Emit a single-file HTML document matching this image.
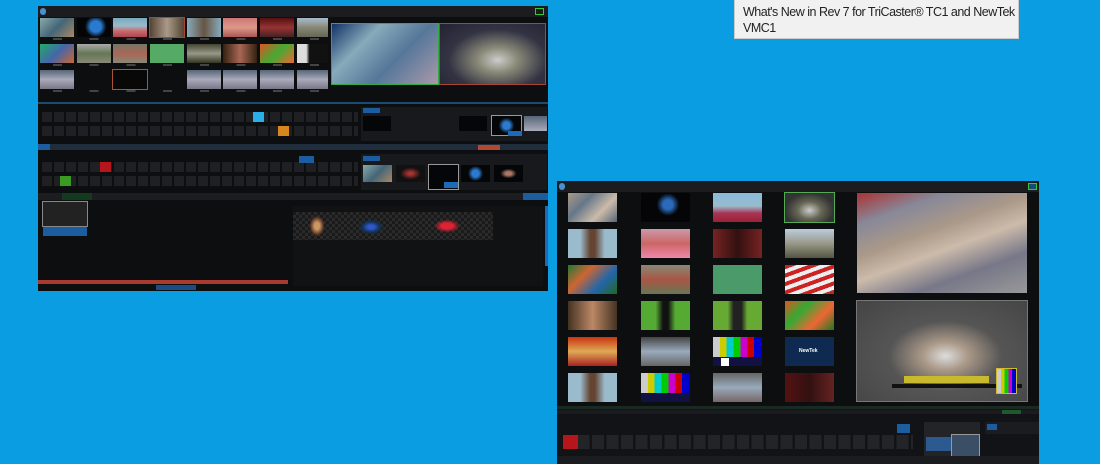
<!DOCTYPE html>
<html><head><meta charset="utf-8"><style>
body{margin:0;width:1100px;height:464px;background:#0b9de2;position:relative;overflow:hidden;font-family:"Liberation Sans",sans-serif}
.a{position:absolute}
.tip{left:734px;top:-1px;width:285px;height:40px;background:#f1f1f1;border:1px solid #ccc;font-size:12.5px;letter-spacing:-0.5px;color:#222;line-height:16px;padding:4px 0 0 8px;box-sizing:border-box;white-space:nowrap;overflow:hidden}
.scr{background:#0d0e10}
.bar{background:#1a1c20}
</style></head><body>
<div class="a tip">What's New in Rev 7 for TriCaster® TC1 and NewTek<br>VMC1</div>

<!-- LEFT SCREENSHOT -->
<div class="a scr" style="left:38px;top:6px;width:510px;height:285px">
 <div class="a bar" style="left:0;top:0;width:510px;height:11px"></div>
 <div class="a" style="left:2px;top:2px;width:6px;height:7px;background:#4a8fd0;border-radius:3px"></div>
 <div class="a" style="left:497px;top:2px;width:9px;height:7px;border:1px solid #3c3;box-sizing:border-box"></div>
 <div class="a" style="left:2px;top:12px;width:34px;height:19px;background:linear-gradient(135deg,#8aa,#467,#a86)"></div>
 <div class="a" style="left:39px;top:12px;width:34px;height:19px;background:radial-gradient(circle at 55% 45%,#2a7bd0 25%,#050508 50%)"></div>
 <div class="a" style="left:75px;top:12px;width:34px;height:19px;background:linear-gradient(#7ab 0,#9bc 40%,#c66 70%,#a45)"></div>
 <div class="a" style="left:112px;top:12px;width:34px;height:19px;background:linear-gradient(90deg,#543,#a98,#543);outline:1px solid #a43"></div>
 <div class="a" style="left:149px;top:12px;width:34px;height:19px;background:linear-gradient(90deg,#8ab,#654,#8ab)"></div>
 <div class="a" style="left:185px;top:12px;width:34px;height:19px;background:linear-gradient(#c77,#d98,#a55)"></div>
 <div class="a" style="left:222px;top:12px;width:34px;height:19px;background:linear-gradient(#511,#933,#422)"></div>
 <div class="a" style="left:259px;top:12px;width:31px;height:19px;background:linear-gradient(#abc,#887,#665)"></div>
 <div class="a" style="left:2px;top:38px;width:34px;height:19px;background:linear-gradient(135deg,#2a6,#46a,#c63)"></div>
 <div class="a" style="left:39px;top:38px;width:34px;height:19px;background:linear-gradient(#aaa,#675,#887)"></div>
 <div class="a" style="left:75px;top:38px;width:34px;height:19px;background:linear-gradient(#776,#a65,#887)"></div>
 <div class="a" style="left:112px;top:38px;width:34px;height:19px;background:#5a6"></div>
 <div class="a" style="left:149px;top:38px;width:34px;height:19px;background:linear-gradient(#443,#998,#332)"></div>
 <div class="a" style="left:185px;top:38px;width:34px;height:19px;background:linear-gradient(90deg,#321,#a65,#321)"></div>
 <div class="a" style="left:222px;top:38px;width:34px;height:19px;background:linear-gradient(135deg,#d52,#4a3,#e63)"></div>
 <div class="a" style="left:259px;top:38px;width:31px;height:19px;background:linear-gradient(90deg,#ddd 30%,#111 40%)"></div>
 <div class="a" style="left:2px;top:64px;width:34px;height:19px;background:linear-gradient(#567,#aab,#778)"></div>
 <div class="a" style="left:75px;top:64px;width:34px;height:19px;background:#080808;outline:1px solid #a53"></div>
 <div class="a" style="left:149px;top:64px;width:34px;height:19px;background:linear-gradient(#567,#aab,#778)"></div>
 <div class="a" style="left:185px;top:64px;width:34px;height:19px;background:linear-gradient(#567,#aab,#778)"></div>
 <div class="a" style="left:222px;top:64px;width:34px;height:19px;background:linear-gradient(#567,#aab,#778)"></div>
 <div class="a" style="left:259px;top:64px;width:31px;height:19px;background:linear-gradient(#567,#aab,#778)"></div>
 <div class="a" style="left:2px;top:32px;width:288px;height:2px;background:repeating-linear-gradient(90deg,transparent 0 13px,#444 13px 22px,transparent 22px 36.7px)"></div>
 <div class="a" style="left:2px;top:58px;width:288px;height:2px;background:repeating-linear-gradient(90deg,transparent 0 13px,#444 13px 22px,transparent 22px 36.7px)"></div>
 <div class="a" style="left:2px;top:84px;width:288px;height:2px;background:repeating-linear-gradient(90deg,transparent 0 13px,#444 13px 22px,transparent 22px 36.7px)"></div>
 <div class="a" style="left:294px;top:18px;width:106px;height:60px;background:linear-gradient(135deg,#136 0,#8ab 30%,#579 60%,#a9a 100%);outline:1px solid #3a4"></div>
 <div class="a" style="left:402px;top:18px;width:105px;height:60px;background:radial-gradient(ellipse at 55% 60%,#ccc 0,#887 25%,#334 60%,#223 100%);outline:1px solid #a43"></div>
 <div class="a" style="left:0;top:96px;width:510px;height:2px;background:#1d4a70"></div>
 <div class="a" style="left:4px;top:106px;width:316px;height:10px;background:repeating-linear-gradient(90deg,#1e2024 0 10px,#0d0e10 10px 12px)"></div>
 <div class="a" style="left:4px;top:120px;width:316px;height:10px;background:repeating-linear-gradient(90deg,#1e2024 0 10px,#0d0e10 10px 12px)"></div>
 <div class="a" style="left:215px;top:106px;width:11px;height:10px;background:#2ab0e8"></div>
 <div class="a" style="left:240px;top:120px;width:11px;height:10px;background:#d8861e"></div>
 <div class="a" style="left:323px;top:101px;width:186px;height:34px;background:#17191c"></div>
 <div class="a" style="left:325px;top:102px;width:17px;height:5px;background:#1c5da0"></div>
 <div class="a" style="left:325px;top:110px;width:28px;height:15px;background:#050608"></div>
 <div class="a" style="left:421px;top:110px;width:28px;height:15px;background:#050608"></div>
 <div class="a" style="left:454px;top:110px;width:29px;height:19px;background:radial-gradient(circle,#2a7bd0 20%,#050608 45%);outline:1px solid #999"></div>
 <div class="a" style="left:470px;top:125px;width:14px;height:5px;background:#1c6ab8"></div>
 <div class="a" style="left:486px;top:110px;width:23px;height:15px;background:linear-gradient(#567,#aab)"></div>
 <div class="a" style="left:0;top:138px;width:510px;height:6px;background:#1f2d3d"></div>
 <div class="a" style="left:0;top:138px;width:12px;height:6px;background:#1c5da0"></div>
 <div class="a" style="left:440px;top:139px;width:22px;height:5px;background:#b4482e"></div>
 <div class="a" style="left:4px;top:156px;width:316px;height:10px;background:repeating-linear-gradient(90deg,#1e2024 0 10px,#0d0e10 10px 12px)"></div>
 <div class="a" style="left:4px;top:170px;width:316px;height:10px;background:repeating-linear-gradient(90deg,#1e2024 0 10px,#0d0e10 10px 12px)"></div>
 <div class="a" style="left:62px;top:156px;width:11px;height:10px;background:#b5161c"></div>
 <div class="a" style="left:22px;top:170px;width:11px;height:10px;background:#3a9a22"></div>
 <div class="a" style="left:261px;top:150px;width:15px;height:7px;background:#1c5da0"></div>
 <div class="a" style="left:323px;top:148px;width:186px;height:36px;background:#17191c"></div>
 <div class="a" style="left:325px;top:150px;width:17px;height:5px;background:#1c5da0"></div>
 <div class="a" style="left:325px;top:159px;width:29px;height:17px;background:linear-gradient(135deg,#8aa,#467,#a86)"></div>
 <div class="a" style="left:358px;top:159px;width:29px;height:17px;background:radial-gradient(#a33 10%,#111 50%)"></div>
 <div class="a" style="left:391px;top:159px;width:29px;height:24px;outline:1px solid #999;background:#050608"></div>
 <div class="a" style="left:406px;top:176px;width:14px;height:6px;background:#1c6ab8"></div>
 <div class="a" style="left:423px;top:159px;width:29px;height:17px;background:radial-gradient(circle,#2a7bd0 20%,#050608 45%)"></div>
 <div class="a" style="left:456px;top:159px;width:29px;height:17px;background:radial-gradient(#a76 15%,#050608 40%)"></div>
 <div class="a" style="left:0;top:187px;width:510px;height:7px;background:#1b1d21"></div>
 <div class="a" style="left:24px;top:187px;width:30px;height:7px;background:#123a1e"></div>
 <div class="a" style="left:485px;top:187px;width:25px;height:7px;background:#1c5da0"></div>
 <div class="a" style="left:5px;top:196px;width:44px;height:24px;background:#222;outline:1px solid #888"></div>
 <div class="a" style="left:5px;top:221px;width:44px;height:9px;background:#1c5da0"></div>
 <div class="a" style="left:255px;top:200px;width:250px;height:80px;background:#111214"></div>
 <div class="a" style="left:255px;top:206px;width:200px;height:28px;background:repeating-conic-gradient(#2a2a2a 0 25%,#1a1a1a 0 50%) 0 0/6px 6px"></div>
 <div class="a" style="left:270px;top:208px;width:18px;height:24px;background:radial-gradient(#c96 20%,#532 50%,transparent 60%)"></div>
 <div class="a" style="left:318px;top:212px;width:30px;height:18px;background:radial-gradient(#35c 15%,#135 40%,transparent 60%)"></div>
 <div class="a" style="left:395px;top:213px;width:28px;height:14px;background:radial-gradient(#d23 30%,transparent 65%)"></div>
 <div class="a" style="left:507px;top:200px;width:3px;height:60px;background:#1c6ab8"></div>
 <div class="a" style="left:0;top:274px;width:250px;height:4px;background:#a93b2e"></div>
 <div class="a" style="left:118px;top:279px;width:40px;height:5px;background:#1c6ab8;opacity:.7"></div>
</div>

<!-- RIGHT SCREENSHOT -->
<div class="a scr" style="left:557px;top:181px;width:482px;height:283px">
 <div class="a bar" style="left:0;top:0;width:482px;height:11px"></div>
 <div class="a" style="left:2px;top:2px;width:6px;height:7px;background:#4a8fd0;border-radius:3px"></div>
 <div class="a" style="left:471px;top:2px;width:9px;height:7px;border:1px solid #3c3;box-sizing:border-box;background:#1a4a7a"></div>
 <div class="a" style="left:11px;top:12px;width:49px;height:29px;background:linear-gradient(135deg,#a98,#678,#cba,#567)"></div>
 <div class="a" style="left:84px;top:12px;width:49px;height:29px;background:radial-gradient(circle at 55% 40%,#2a6ab8 15%,#050508 35%)"></div>
 <div class="a" style="left:156px;top:12px;width:49px;height:29px;background:linear-gradient(#8bd 0,#9bc 45%,#a35 70%,#923)"></div>
 <div class="a" style="left:228px;top:12px;width:49px;height:29px;background:radial-gradient(ellipse at 50% 60%,#ccc 0,#665 35%,#333 70%);outline:1px solid #5a5"></div>
 <div class="a" style="left:11px;top:48px;width:49px;height:29px;background:linear-gradient(90deg,#9bc 25%,#643 45%,#643 55%,#9bc 75%)"></div>
 <div class="a" style="left:84px;top:48px;width:49px;height:29px;background:linear-gradient(#c9a,#c66,#e8a)"></div>
 <div class="a" style="left:156px;top:48px;width:49px;height:29px;background:linear-gradient(90deg,#722,#311,#722)"></div>
 <div class="a" style="left:228px;top:48px;width:49px;height:29px;background:linear-gradient(#bcd,#998,#554)"></div>
 <div class="a" style="left:11px;top:84px;width:49px;height:29px;background:linear-gradient(135deg,#273,#c63,#26a,#262)"></div>
 <div class="a" style="left:84px;top:84px;width:49px;height:29px;background:linear-gradient(#887,#a54,#675)"></div>
 <div class="a" style="left:156px;top:84px;width:49px;height:29px;background:#4b9a6a"></div>
 <div class="a" style="left:228px;top:84px;width:49px;height:29px;background:repeating-linear-gradient(160deg,#c22 0 4px,#eee 4px 8px)"></div>
 <div class="a" style="left:11px;top:120px;width:49px;height:29px;background:linear-gradient(90deg,#432,#b86,#432)"></div>
 <div class="a" style="left:84px;top:120px;width:49px;height:29px;background:linear-gradient(90deg,#5a3 30%,#111 45%,#111 55%,#5a3 70%)"></div>
 <div class="a" style="left:156px;top:120px;width:49px;height:29px;background:linear-gradient(90deg,#6a3 30%,#222 42%,#222 58%,#6a3 70%)"></div>
 <div class="a" style="left:228px;top:120px;width:49px;height:29px;background:linear-gradient(135deg,#d52,#3a3,#e63,#272)"></div>
 <div class="a" style="left:11px;top:156px;width:49px;height:29px;background:linear-gradient(#c31,#da5,#a22)"></div>
 <div class="a" style="left:84px;top:156px;width:49px;height:29px;background:linear-gradient(#444,#9ab,#666)"></div>
 <div class="a" style="left:156px;top:156px;width:49px;height:29px;background:linear-gradient(90deg,#ccc 0 14%,#cc0 14% 28%,#0cc 28% 42%,#0c0 42% 56%,#c0c 56% 70%,#c00 70% 84%,#00c 84%)"></div>
 <div class="a" style="left:156px;top:176px;width:49px;height:9px;background:#114"></div>
 <div class="a" style="left:164px;top:177px;width:8px;height:8px;background:#fff"></div>
 <div class="a" style="left:228px;top:156px;width:49px;height:29px;background:#0e2a50"></div>
 <div class="a" style="left:242px;top:167px;width:22px;height:6px;color:#fff;font-size:5px;font-weight:bold">NewTek</div>
 <div class="a" style="left:11px;top:192px;width:49px;height:29px;background:linear-gradient(90deg,#9bc 25%,#643 45%,#643 55%,#9bc 75%)"></div>
 <div class="a" style="left:84px;top:192px;width:49px;height:29px;background:linear-gradient(90deg,#ccc 0 14%,#cc0 14% 28%,#0cc 28% 42%,#0c0 42% 56%,#c0c 56% 70%,#c00 70% 84%,#00c 84%)"></div>
 <div class="a" style="left:84px;top:212px;width:49px;height:9px;background:#114"></div>
 <div class="a" style="left:156px;top:192px;width:49px;height:29px;background:linear-gradient(#666,#9ab,#766)"></div>
 <div class="a" style="left:228px;top:192px;width:49px;height:29px;background:linear-gradient(90deg,#511,#311,#622)"></div>
 <div class="a" style="left:300px;top:12px;width:170px;height:100px;background:linear-gradient(160deg,#a33 0,#889 20%,#a98 40%,#cba 55%,#778 75%,#999 100%)"></div>
 <div class="a" style="left:300px;top:120px;width:170px;height:100px;background:radial-gradient(ellipse at 52% 55%,#ddd 0,#a98 18%,#555 45%,#444 100%);outline:1px solid #777"></div>
 <div class="a" style="left:347px;top:195px;width:85px;height:7px;background:#c9b92e"></div>
 <div class="a" style="left:335px;top:203px;width:130px;height:4px;background:#111"></div>
 <div class="a" style="left:440px;top:188px;width:19px;height:24px;background:linear-gradient(90deg,#ccc 0 20%,#cc0 20% 40%,#0c0 40% 60%,#c0c 60% 80%,#00c 80%);outline:1px solid #cb3"></div>
 <div class="a" style="left:0;top:225px;width:482px;height:3px;background:#1a2a22"></div>
 <div class="a" style="left:0;top:228px;width:482px;height:55px;background:#121316"></div>
 <div class="a" style="left:0;top:229px;width:482px;height:4px;background:#1a1c20"></div>
 <div class="a" style="left:445px;top:229px;width:19px;height:4px;background:#1e5a2e"></div>
 <div class="a" style="left:6px;top:254px;width:350px;height:14px;background:repeating-linear-gradient(90deg,#222428 0 12px,#121316 12px 14.5px)"></div>
 <div class="a" style="left:6px;top:254px;width:15px;height:14px;background:#b5161c"></div>
 <div class="a" style="left:340px;top:243px;width:13px;height:9px;background:#1c5da0"></div>
 <div class="a" style="left:367px;top:241px;width:56px;height:38px;background:#222428"></div>
 <div class="a" style="left:369px;top:256px;width:26px;height:14px;background:#2c5a90"></div>
 <div class="a" style="left:395px;top:254px;width:27px;height:24px;background:#3a4e66;outline:1px solid #999"></div>
 <div class="a" style="left:428px;top:241px;width:54px;height:12px;background:#1a1c20"></div>
 <div class="a" style="left:430px;top:243px;width:10px;height:6px;background:#1c5da0"></div>
 <div class="a" style="left:0;top:275px;width:482px;height:8px;background:#1a1c20"></div>
</div>
</body></html>
